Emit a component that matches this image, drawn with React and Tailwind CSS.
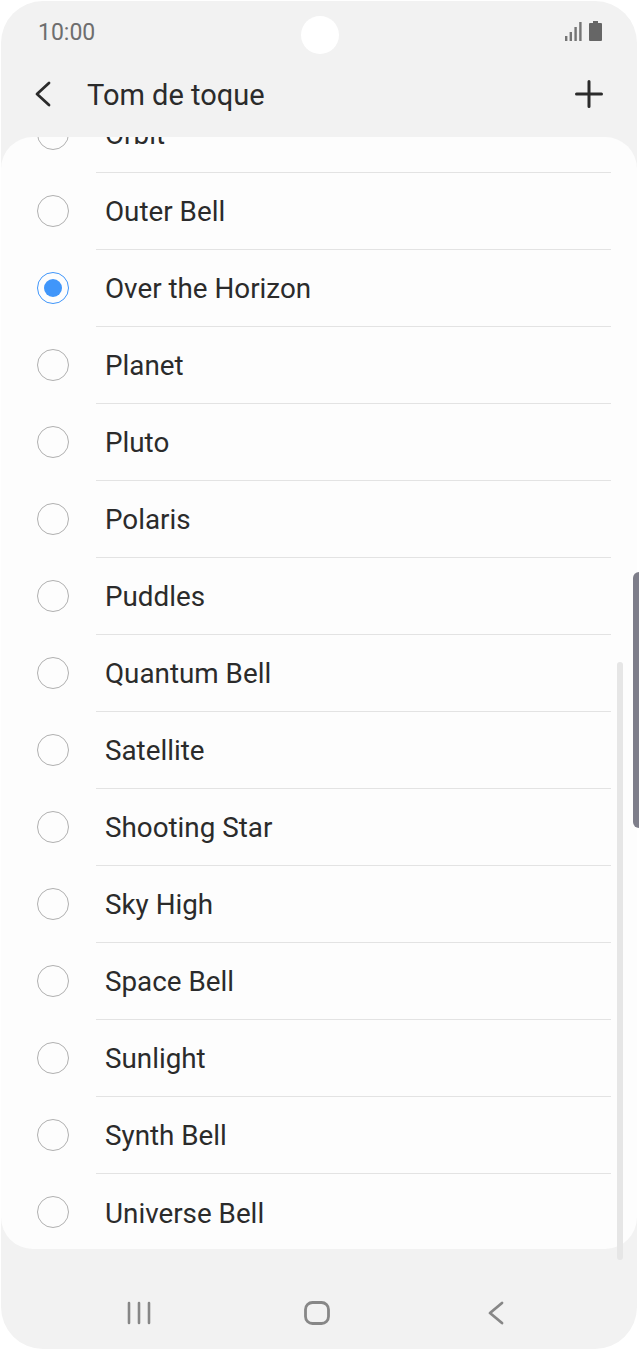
import React from 'react';

const TONES = [
  'Orbit', 'Outer Bell', 'Over the Horizon', 'Planet', 'Pluto', 'Polaris', 'Puddles', 'Quantum Bell',
  'Satellite', 'Shooting Star', 'Sky High', 'Space Bell', 'Sunlight', 'Synth Bell', 'Universe Bell',
];
const SELECTED = 'Over the Horizon';

const Radio = ({ checked }) => (
  <span className={`mb-[2px] flex h-[32px] w-[32px] shrink-0 items-center justify-center rounded-full border-[1.7px] ${checked ? 'border-[#4096fa]' : 'border-[#b0b0b0]'}`}>
    {checked && <span className="h-[18px] w-[18px] rounded-full bg-[#4096fa]" />}
  </span>
);

const ToneRow = ({ name, last }) => (
  <div className="flex h-[77px] items-center pl-[36px]">
    <Radio checked={name === SELECTED} />
    <div className={`ml-[27px] mr-[26px] flex h-[77px] flex-1 items-center border-[#e3e3e3] ${last ? '' : 'border-b'}`}>
      <span className="pl-[9px] pt-[2px] text-[27.8px] leading-none text-[#2b2b2b]">{name}</span>
    </div>
  </div>
);

const App = () => {
  return (
    <div className="relative h-[1350px] w-[639px] overflow-hidden bg-white font-['Roboto',sans-serif]">
      <div className="relative ml-[1px] mt-[1px] flex h-[1348px] w-[636px] flex-col overflow-hidden rounded-[42px] bg-[#f2f2f2]">
        {/* Status bar */}
        <div className="flex h-[60px] shrink-0 items-center justify-between pl-[37px] pr-[35px]">
          <span className="pt-[2px] text-[23px] leading-none text-[#6e6e6e]">10:00</span>
          <div className="flex items-center gap-[7px]">
            <svg width="17" height="19" viewBox="0 0 17 19" fill="#757575">
              <rect x="0" y="14" width="2.4" height="5" />
              <rect x="4.6" y="10" width="2.4" height="9" />
              <rect x="9.4" y="5" width="2.4" height="14" />
              <rect x="14.2" y="0" width="2.4" height="19" />
            </svg>
            <svg width="13" height="20" viewBox="0 0 13 20" fill="#666666">
              <path d="M4 0h5v2h3a1 1 0 0 1 1 1v16a1 1 0 0 1-1 1H1a1 1 0 0 1-1-1V3a1 1 0 0 1 1-1h3z" />
            </svg>
          </div>
        </div>

        {/* Header */}
        <div className="flex h-[76px] shrink-0 items-center justify-between pb-[10px] pl-[33px] pr-[33px]">
          <div className="flex items-center">
            <svg width="18" height="26" viewBox="0 0 18 26" fill="none" stroke="#2b2b2b" strokeWidth="2.8" strokeLinecap="round" strokeLinejoin="round">
              <path d="M15 2 3 13l12 11" />
            </svg>
            <span className="ml-[35px] pt-[2px] text-[29px] leading-none text-[#2b2b2b]">Tom de toque</span>
          </div>
          <svg width="30" height="30" viewBox="0 0 30 30" fill="none" stroke="#2b2b2b" strokeWidth="3" strokeLinecap="round">
            <path d="M15 2.5v25M2.5 15h25" />
          </svg>
        </div>

        {/* Tone list */}
        <div className="h-[1112px] shrink-0 overflow-hidden rounded-[32px] bg-[#fdfdfd]">
          <div className="-mt-[41px]">
            {TONES.map((name, i) => (
              <ToneRow key={name} name={name} last={i === TONES.length - 1} />
            ))}
          </div>
        </div>

        {/* Navigation bar */}
        <div className="flex flex-1 items-start pt-[52px]">
          <div className="flex w-full justify-between pl-[126px] pr-[133px]">
            <svg width="24" height="24" viewBox="0 0 24 24" fill="none" stroke="#878787" strokeWidth="2.6" strokeLinecap="round">
              <path d="M2 2v20M12 2v20M22 2v20" />
            </svg>
            <svg className="mr-[6px]" width="26" height="24" viewBox="0 0 26 24" fill="none" stroke="#878787" strokeWidth="2.8">
              <rect x="1.5" y="1.5" width="23" height="21" rx="7" />
            </svg>
            <svg width="16" height="24" viewBox="0 0 16 24" fill="none" stroke="#878787" strokeWidth="2.8" strokeLinecap="round" strokeLinejoin="round">
              <path d="M14 2 2 12l12 10" />
            </svg>
          </div>
        </div>

        {/* Camera cutout */}
        <div className="absolute left-[300px] top-[15px] h-[38px] w-[38px] rounded-full bg-white" />
        {/* Scrollbar */}
        <div className="absolute left-[616px] top-[661px] h-[598px] w-[6px] rounded-full bg-[#e6e6e6]" />
      </div>
      {/* Side key */}
      <div className="absolute left-[633px] top-[572px] h-[256px] w-[6px] rounded-l-[6px] bg-[#7e7e8a]" />
    </div>
  );
};

export default App;
